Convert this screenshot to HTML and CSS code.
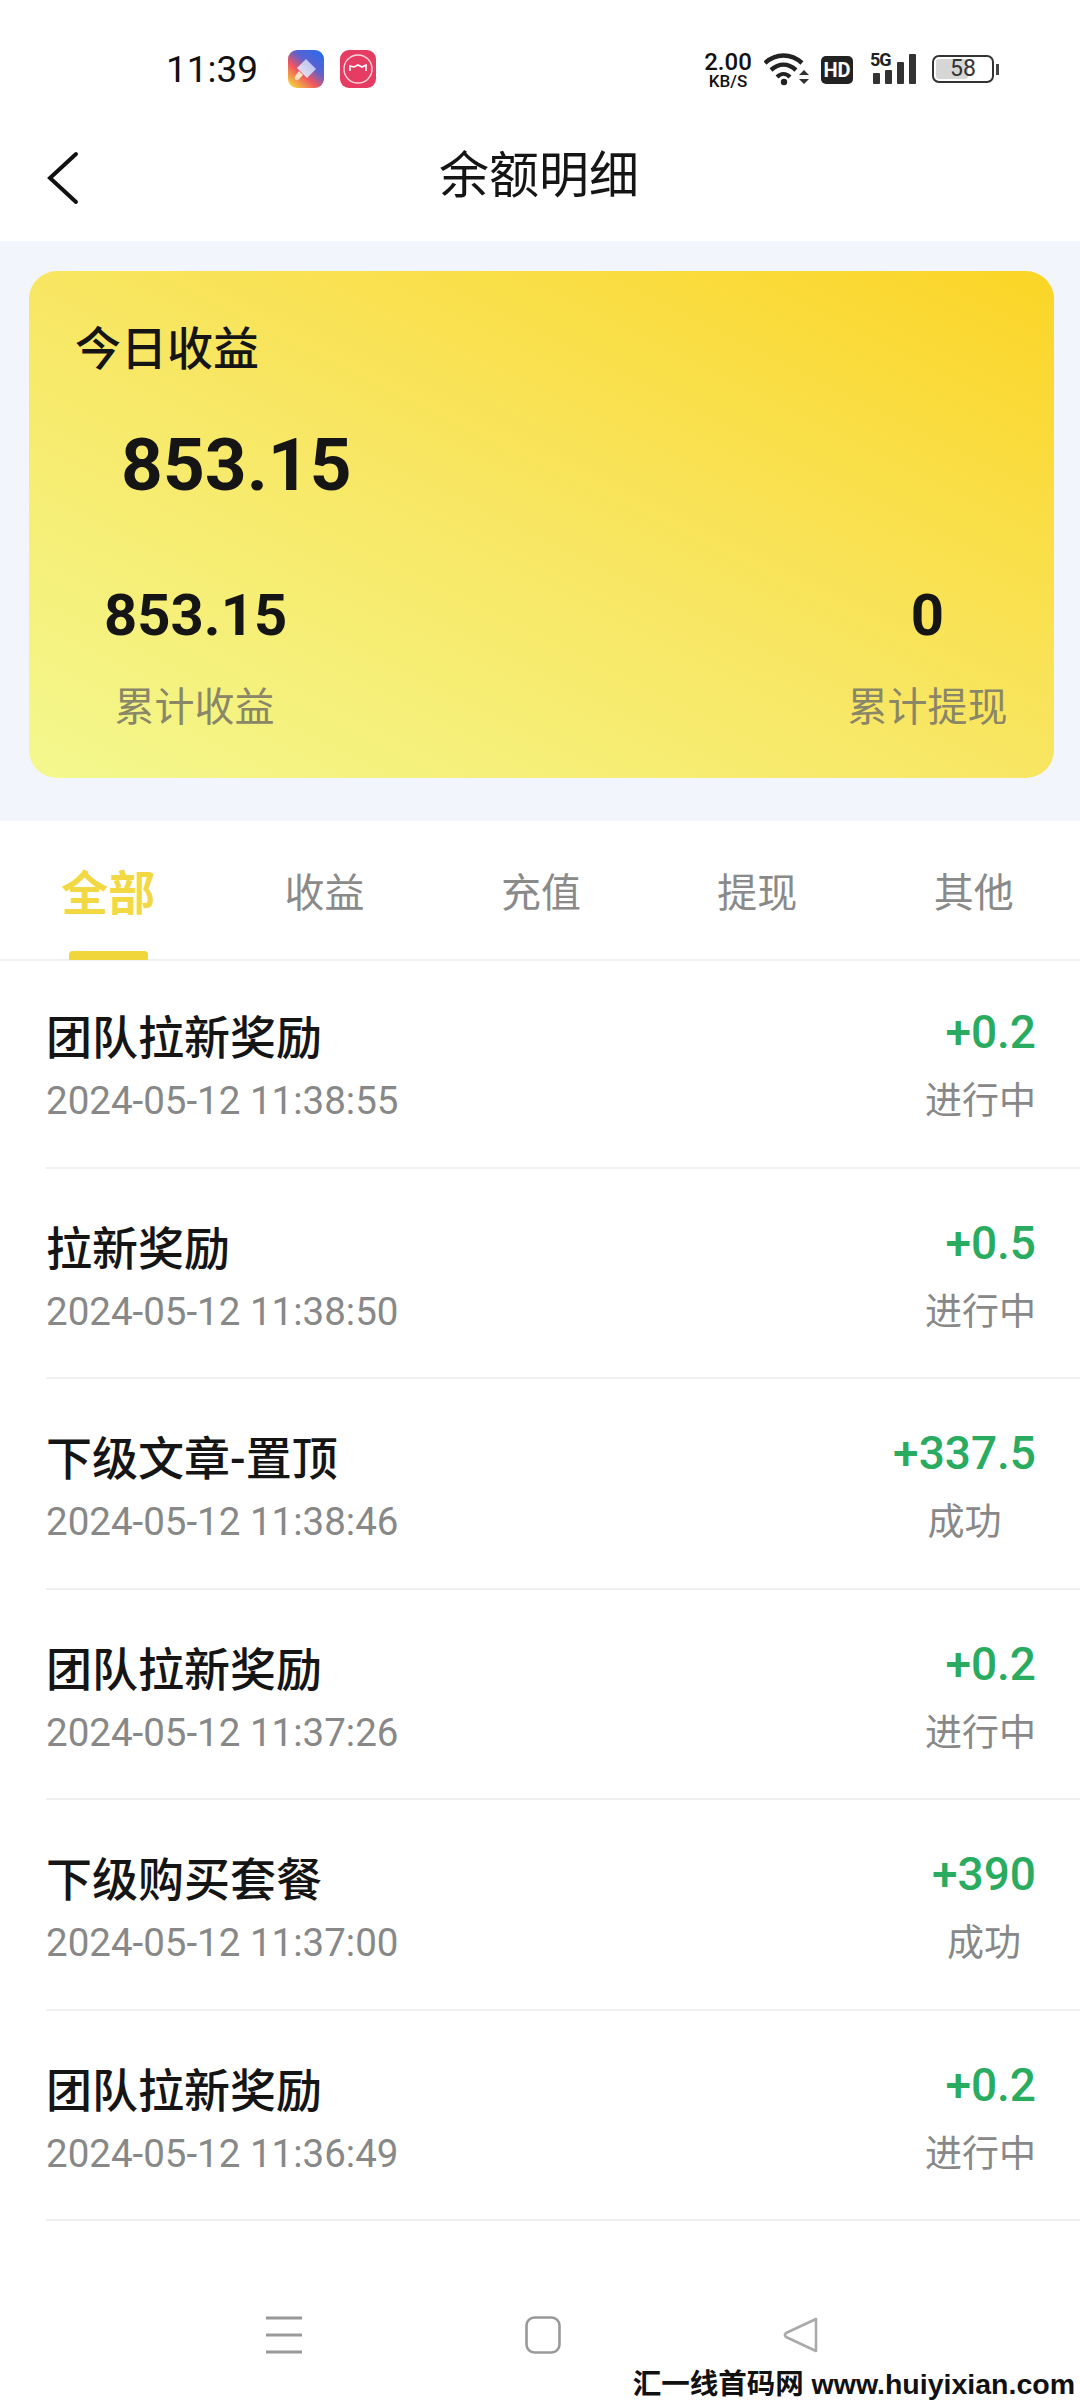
FILE: index.html
```html
<!DOCTYPE html>
<html>
<head lang="zh">
    <meta charset="UTF-8">
    <title>余额明细</title>
    <link rel="stylesheet" href="styles.css">
</head>
<body>
    <div class="status">
        <span class="time">11:39</span>
        <svg class="app-icon" viewBox="0 0 36 38">
            <defs>
                <linearGradient id="brushBg" x1="1" y1="0" x2="0.2" y2="1">
                    <stop offset="0" stop-color="#1f6cf0"/>
                    <stop offset="0.42" stop-color="#5b62d0"/>
                    <stop offset="0.68" stop-color="#ee5560"/>
                    <stop offset="1" stop-color="#f6c83e"/>
                </linearGradient>
                <linearGradient id="brushHead" x1="1" y1="0" x2="0" y2="1">
                    <stop offset="0" stop-color="#a9bdf5"/>
                    <stop offset="1" stop-color="#f6e6ea"/>
                </linearGradient>
            </defs>
            <rect width="36" height="38" rx="9" fill="url(#brushBg)"/>
            <path d="M18 9L28 19L19 28L9 18Z" fill="url(#brushHead)"/>
            <path d="M11 21L15 25L10 30Q8 31 7 29Q6 27 8 25Z" fill="#fbe4c4"/>
        </svg>
        <svg class="app-icon" viewBox="0 0 36 38">
            <rect width="36" height="38" rx="9" fill="#e63c63"/>
            <circle cx="18" cy="19" r="14" fill="none" stroke="#f9d5dc" stroke-width="1.4"/>
            <path d="M10 21V16L14 17L18 15L22 17L26 15V21" fill="none" stroke="#fff" stroke-width="1.6"/>
        </svg>
        <div class="status-right">
            <div class="speed"><b>2.00</b><i>KB/S</i></div>
            <svg class="wifi" width="46" height="34" viewBox="0 0 46 34">
                <path d="M1 11C12 1 27 1 38 11" fill="none" stroke="#222" stroke-width="4.4"/>
                <path d="M7 18C15 11 24 11 32 18" fill="none" stroke="#222" stroke-width="4.4"/>
                <path d="M13 25C17 21 22 21 26 25" fill="none" stroke="#222" stroke-width="4"/>
                <circle cx="20" cy="30" r="3.2" fill="#222"/>
                <path d="M35 23L40 18L45 23ZM35 27L45 27L40 32Z" fill="#333"/>
            </svg>
            <span class="hd">HD</span>
            <div class="signal">
                <span class="five-g">5G</span>
                <svg width="46" height="32" viewBox="0 0 46 32">
                    <rect x="3" y="21" width="7" height="11" rx="1" fill="#333"/>
                    <rect x="15" y="18" width="7" height="14" rx="1" fill="#333"/>
                    <rect x="27" y="10" width="7" height="22" rx="1" fill="#333"/>
                    <rect x="39" y="2" width="7" height="30" rx="1" fill="#333"/>
                </svg>
            </div>
            <div class="battery"><div class="battery-fill"></div><span>58</span></div>
            <div class="battery-nub"></div>
        </div>
    </div>

    <div class="nav">
        <svg class="back" width="32" height="54" viewBox="0 0 32 54">
            <path d="M29 3L3 27L29 51" fill="none" stroke="#111" stroke-width="4" stroke-linecap="round"/>
        </svg>
        <span class="nav-title">余额明细</span>
    </div>

    <div class="band">
        <div class="card">
            <div class="today-label">今日收益</div>
            <div class="today-value">853.15</div>
            <div class="totals">
                <div class="total">
                    <div class="total-value">853.15</div>
                    <div class="total-label">累计收益</div>
                </div>
                <div class="total">
                    <div class="total-value">0</div>
                    <div class="total-label">累计提现</div>
                </div>
            </div>
        </div>
    </div>

    <div class="tabs">
        <div class="tab active">全部</div>
        <div class="tab">收益</div>
        <div class="tab">充值</div>
        <div class="tab">提现</div>
        <div class="tab">其他</div>
    </div>

    <div class="list">
        <div class="row">
            <div><div class="row-title">团队拉新奖励</div><div class="row-date">2024-05-12 11:38:55</div></div>
            <div class="row-side"><div class="amount">+0.2</div><div class="state">进行中</div></div>
        </div>
        <div class="row">
            <div><div class="row-title">拉新奖励</div><div class="row-date">2024-05-12 11:38:50</div></div>
            <div class="row-side"><div class="amount">+0.5</div><div class="state">进行中</div></div>
        </div>
        <div class="row">
            <div><div class="row-title">下级文章-置顶</div><div class="row-date">2024-05-12 11:38:46</div></div>
            <div class="row-side"><div class="amount">+337.5</div><div class="state">成功</div></div>
        </div>
        <div class="row">
            <div><div class="row-title">团队拉新奖励</div><div class="row-date">2024-05-12 11:37:26</div></div>
            <div class="row-side"><div class="amount">+0.2</div><div class="state">进行中</div></div>
        </div>
        <div class="row">
            <div><div class="row-title">下级购买套餐</div><div class="row-date">2024-05-12 11:37:00</div></div>
            <div class="row-side"><div class="amount">+390</div><div class="state">成功</div></div>
        </div>
        <div class="row">
            <div><div class="row-title">团队拉新奖励</div><div class="row-date">2024-05-12 11:36:49</div></div>
            <div class="row-side"><div class="amount">+0.2</div><div class="state">进行中</div></div>
        </div>
    </div>

    <div class="softkeys">
        <svg width="38" height="38" viewBox="0 0 38 38">
            <path d="M1 2H37M1 19H37M1 36H37" stroke="#999" stroke-width="3"/>
        </svg>
        <svg width="36" height="38" viewBox="0 0 36 38">
            <rect x="1.5" y="1.5" width="33" height="35" rx="8" fill="none" stroke="#999" stroke-width="2.6"/>
        </svg>
        <svg width="36" height="38" viewBox="0 0 36 38">
            <path d="M33 3V35L3 21Q1 19 3 17Z" fill="none" stroke="#aaa" stroke-width="2.6" stroke-linejoin="round"/>
        </svg>
    </div>

    <div class="watermark">汇一线首码网 www.huiyixian.com</div>
</body>
</html>
```

FILE: styles.css
```css
*{
    box-sizing: border-box;
}
body{
    margin: 0;
    width: 1080px;
    height: 2400px;
    position: relative;
    overflow: hidden;
    background: #fff;
    color: #151515;
    font-family: Roboto, "Noto Sans CJK SC", sans-serif;
}

/* status bar */
.status{
    height: 80px;
    padding: 50px 0 0 166px;
    display: flex;
    align-items: flex-start;
}
.time{
    width: 122px;
    margin-top: -1px;
    font-size: 37px;
    line-height: 42px;
    color: #111;
}
.app-icon{
    width: 36px;
    height: 38px;
    margin-right: 16px;
}
.status-right{
    position: absolute;
    top: 52px;
    left: 703px;
    display: flex;
    align-items: flex-start;
}
.speed{
    width: 50px;
    margin-right: 11px;
    text-align: center;
    color: #111;
}
.speed b{
    display: block;
    font-weight: 500;
    font-size: 24px;
    line-height: 21px;
}
.speed i{
    display: block;
    margin-top: 1px;
    font-style: normal;
    font-weight: 500;
    font-size: 17px;
    line-height: 15px;
}
.wifi{
    margin-right: 11px;
}
.hd{
    width: 32px;
    height: 28px;
    margin: 4px 17px 0 0;
    background: #222;
    border-radius: 5px;
    color: #fff;
    font-size: 20px;
    font-weight: 700;
    line-height: 28px;
    text-align: center;
}
.signal{
    width: 46px;
    height: 32px;
    margin-right: 16px;
    position: relative;
}
.five-g{
    position: absolute;
    top: 0;
    left: 0;
    font-size: 18px;
    font-weight: 700;
    letter-spacing: -1px;
    line-height: 16px;
    color: #222;
}
.battery{
    width: 62px;
    height: 28px;
    margin-top: 3px;
    position: relative;
    border: 2px solid #333;
    border-radius: 7px;
    text-align: center;
    font-size: 23px;
    line-height: 24px;
    color: #333;
}
.battery-fill{
    position: absolute;
    top: 2px;
    bottom: 2px;
    left: 2px;
    width: 32px;
    background: #d6d6d6;
    border-radius: 3px;
}
.battery span{
    position: relative;
}
.battery-nub{
    width: 3px;
    height: 11px;
    margin: 12px 0 0 2px;
    background: #444;
}

/* title bar */
.nav{
    height: 161px;
    position: relative;
    display: flex;
    justify-content: center;
    align-items: center;
}
.back{
    position: absolute;
    left: 47px;
    top: 71px;
}
.nav-title{
    font-size: 50px;
    line-height: 60px;
    margin: 30px 2px 0 0;
    color: #151515;
}

/* yellow card */
.band{
    height: 580px;
    padding: 30px 26px 0 29px;
    background: #f3f5fc;
}
.card{
    height: 507px;
    padding-top: 51px;
    border-radius: 28px;
    background: linear-gradient(to top right, #f3f88e 0%, #f8e662 50%, #fbd526 100%);
}
.today-label{
    margin-left: 46px;
    font-size: 46px;
    font-weight: 500;
    line-height: 54px;
}
.today-value{
    margin: 47px 0 0 92px;
    font-size: 73px;
    font-weight: 700;
    line-height: 84px;
}
.totals{
    margin-top: 75px;
    padding: 0 36px 0 75px;
    display: flex;
    justify-content: space-between;
}
.total{
    width: 181px;
    text-align: center;
}
.total-value{
    font-size: 58px;
    font-weight: 700;
    line-height: 66px;
    white-space: nowrap;
}
.total-label{
    margin-top: 35px;
    font-size: 40px;
    line-height: 50px;
    color: #8a8668;
}

/* tabs */
.tabs{
    height: 140px;
    display: grid;
    grid-template-columns: repeat(5, 216.4px);
    border-bottom: 2px solid #efefef;
}
.tab{
    padding-top: 43px;
    position: relative;
    text-align: center;
    font-size: 40px;
    line-height: 60px;
    color: #8a8a8a;
}
.tab.active{
    font-size: 47px;
    font-weight: 700;
    color: #f2d944;
}
.tab.active::after{
    content: "";
    position: absolute;
    left: 69px;
    bottom: -1px;
    width: 79px;
    height: 9px;
    border-radius: 4px 4px 0 0;
    background: #f0d63a;
}

/* records */
.list{
    margin-left: 46px;
}
.row{
    height: 210.6px;
    padding: 50px 44px 0 0;
    display: flex;
    justify-content: space-between;
    border-bottom: 2px solid #f0f0f0;
}
.row:first-child{
    height: 207.5px;
    padding-top: 47px;
}
.row-title{
    font-size: 46px;
    font-weight: 500;
    line-height: 60px;
    color: #151515;
}
.row-date{
    margin-top: 6px;
    font-size: 38.5px;
    line-height: 54px;
    color: #888;
}
.row-side{
    width: max-content;
}
.amount{
    margin-top: -6px;
    font-size: 46px;
    font-weight: 500;
    line-height: 60px;
    text-align: right;
    color: #29ab60;
}
.state{
    margin-top: 13px;
    font-size: 37px;
    line-height: 54px;
    text-align: center;
    color: #888;
}

/* system keys */
.softkeys{
    position: absolute;
    top: 2316px;
    left: 265px;
    display: flex;
    gap: 222px;
}
.watermark{
    position: absolute;
    right: 5px;
    top: 2369px;
    font-family: "Liberation Sans", "Noto Sans CJK SC", sans-serif;
    font-size: 28.5px;
    font-weight: 700;
    line-height: 30px;
    white-space: nowrap;
    color: #111;
}
```
